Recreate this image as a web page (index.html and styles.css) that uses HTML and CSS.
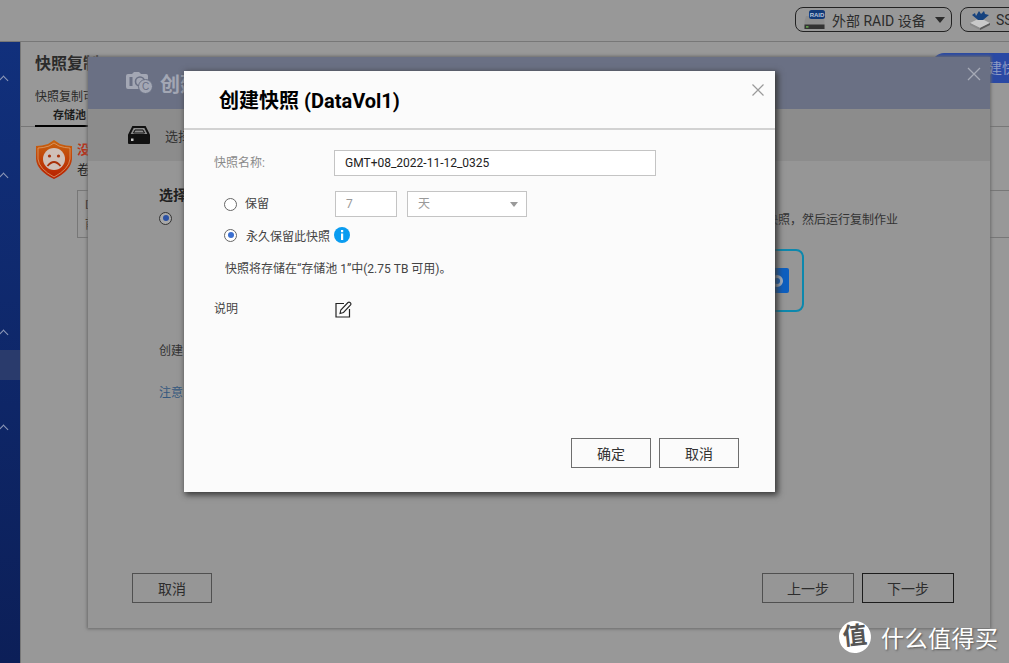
FILE: index.html
```html
<!DOCTYPE html>
<html lang="zh-CN">
<head>
    <meta charset="UTF-8">
    <meta name="viewport" content="width=device-width, initial-scale=1.0">
    <title>创建快照</title>
    <link rel="stylesheet" href="styles.css">
</head>
<body>
    <div class="desktop">
        <!-- 顶部工具栏 -->
        <div class="topbar">
            <div class="pill pill-raid">
                <svg class="pill-icon" width="21" height="20" viewBox="0 0 21 20">
                    <path d="M2 6 H19 L20.500 11 V19 H0.500 V11 Z" fill="#8e8e8e"/>
                    <rect x="0.500" y="14.500" width="20" height="4.500" fill="#333"/>
                    <rect x="2" y="16" width="2.500" height="1.800" fill="#5d9a4a"/>
                    <rect x="5" y="0" width="16" height="9" rx="2.500" fill="#123a78"/>
                    <text x="13" y="7" class="raid-tag">RAID</text>
                </svg>
                <span>外部 RAID 设备</span>
                <i class="caret"></i>
            </div>
            <div class="pill pill-ss">
                <svg class="pill-icon" width="22" height="22" viewBox="0 0 22 22">
                    <path d="M1 14 L11 9 L21 14 L11 19 Z" fill="#c9c9c9"/>
                    <path d="M1 14 L11 19 V21 L1 16 Z" fill="#8a8a8a"/>
                    <path d="M11 19 L21 14 V16 L11 21 Z" fill="#5a5a5a"/>
                    <path d="M3 6 L6 4 L7 7 L10 2 L12 5 L15 2 L16 5 L20 6 L14 11 L9 11 Z" fill="#16427e"/>
                </svg>
                <span>SSD</span>
            </div>
        </div>

        <div class="below">
            <!-- 左侧导航 -->
            <div class="sidebar">
                <div class="nav-row first"><i class="chev"></i></div>
                <div class="nav-row second"><i class="chev"></i></div>
                <div class="nav-row third"><i class="chev"></i></div>
                <div class="nav-row current"></div>
                <div class="nav-row fourth"><i class="chev"></i></div>
            </div>

            <!-- 后面的页面 -->
            <div class="main">
                <div class="main-head">
                    <h2 class="main-title">快照复制</h2>
                    <div class="create-btn">创建快照</div>
                </div>
                <p class="main-desc">快照复制可</p>
                <div class="tabs"><span class="tab on">存储池</span></div>
                <div class="alert">
                    <svg width="38" height="41" viewBox="0 0 38 41">
                        <defs>
                            <linearGradient id="shieldFill" x1="0" y1="0" x2="0" y2="1">
                                <stop offset="0" stop-color="#c8640f"/>
                                <stop offset="1" stop-color="#b81f00"/>
                            </linearGradient>
                        </defs>
                        <path d="M19 1 L25 5 Q31 7 37 7 L37 20 Q36 32 19 40 Q2 32 1 20 L1 7 Q7 7 13 5 Z" fill="url(#shieldFill)"/>
                        <path d="M19 4 L24 7 Q30 9 35 9 L35 20 Q34 30 19 38 Q4 30 3 20 L3 9 Q8 9 14 7 Z" fill="none" stroke="#d9a070" stroke-width="0.800"/>
                        <circle cx="19" cy="20" r="11" fill="#cfc0b8"/>
                        <circle cx="14.500" cy="17" r="1.600" fill="#a83008"/>
                        <circle cx="23.500" cy="17" r="1.600" fill="#a83008"/>
                        <path d="M12.500 27 Q19 19 25.500 27" fill="none" stroke="#a83008" stroke-width="1.800"/>
                    </svg>
                    <div class="alert-text">
                        <div class="alert-red">没有</div>
                        <div class="alert-line">卷</div>
                    </div>
                </div>
                <div class="infobox">
                    <div>D</div>
                    <div>前</div>
                </div>
            </div>
        </div>

        <!-- 向导窗口 -->
        <div class="wizard">
            <div class="wiz-head">
                <svg width="27" height="22" viewBox="0 0 27 22">
                    <path d="M0 4 Q0 2 2 2 H6 L8 0 H13 L15 2 H20 Q22 2 22 4 V17 H2 Q0 17 0 15 Z" fill="#a3a7b4"/>
                    <rect x="3.500" y="5" width="3" height="9" fill="#6a7084"/>
                    <circle cx="14" cy="9.500" r="4.500" fill="none" stroke="#6a7084" stroke-width="1.600"/>
                    <circle cx="19.500" cy="14.500" r="7" fill="#a3a7b4" stroke="#6a7084"/>
                    <text x="19.500" y="18.200" class="logo-c">C</text>
                </svg>
                <span class="wiz-title">创建快照</span>
                <svg class="wiz-close" width="14" height="14" viewBox="0 0 14 14">
                    <path d="M1 1 L13 13 M13 1 L1 13" stroke="#a6aab6" stroke-width="1.300"/>
                </svg>
            </div>
            <div class="wiz-step">
                <svg width="22" height="18" viewBox="0 0 22 18">
                    <path d="M5 1 H17 L21 9 H1 Z" fill="none" stroke="#111" stroke-width="2"/>
                    <path d="M7 4 H15 L16.500 7 H5.500 Z" fill="none" stroke="#111" stroke-width="1"/>
                    <rect x="0" y="9" width="22" height="9" rx="1" fill="#111"/>
                    <rect x="3" y="12.500" width="2.500" height="2.500" fill="#ccc"/>
                </svg>
                <span>选择快照</span>
            </div>
            <div class="wiz-body">
                <h3 class="wiz-sub">选择</h3>
                <div class="wiz-option">
                    <i class="radio on dim"></i>
                    <span>创建快照，然后运行复制作业</span>
                </div>
                <div class="wiz-cards">
                    <div class="wiz-card">
                        <div class="card-square"><i class="card-ring"></i></div>
                    </div>
                </div>
                <p class="wiz-line">创建</p>
                <p class="wiz-line note">注意</p>
            </div>
            <div class="wiz-foot">
                <button class="btn dim-btn">取消</button>
                <div class="foot-right">
                    <button class="btn dim-btn wide">上一步</button>
                    <button class="btn dim-btn wide strong">下一步</button>
                </div>
            </div>
        </div>

        <!-- 创建快照对话框 -->
        <div class="modal">
            <div class="modal-head">
                <h1 class="modal-title">创建快照 (DataVol1)</h1>
                <svg class="modal-close" width="12" height="12" viewBox="0 0 12 12">
                    <path d="M0.500 0.500 L11.500 11.500 M11.500 0.500 L0.500 11.500" stroke="#9a9a9a" stroke-width="1.200"/>
                </svg>
            </div>
            <div class="modal-body">
                <div class="field-row">
                    <label class="field-label gray">快照名称:</label>
                    <div class="input name-input">GMT+08_2022-11-12_0325</div>
                </div>
                <div class="keep-row">
                    <i class="radio"></i>
                    <span class="keep-label">保留</span>
                    <div class="input days">7</div>
                    <div class="input unit">天<i class="caret light"></i></div>
                </div>
                <div class="forever-row">
                    <i class="radio on"></i>
                    <span class="forever-label">永久保留此快照</span>
                    <svg width="16" height="16" viewBox="0 0 16 16">
                        <circle cx="8" cy="8" r="8" fill="#0a9cf0"/>
                        <rect x="7" y="3" width="2.200" height="2.200" fill="#fff"/>
                        <rect x="7" y="6.500" width="2.200" height="6.500" fill="#fff"/>
                    </svg>
                </div>
                <p class="store-note">快照将存储在“存储池 1”中(2.75 TB 可用)。</p>
                <div class="desc-row">
                    <label class="field-label">说明</label>
                    <svg width="17" height="17" viewBox="0 0 17 17">
                        <path d="M9 2.500 H1 V16 H14.500 V8" fill="none" stroke="#222" stroke-width="1.200"/>
                        <path d="M5 12.500 L5.800 9 L13 1.500 Q14 0.800 15 1.500 L15.800 2.300 Q16.300 3.200 15.600 4 L8.500 11.500 Z" fill="none" stroke="#222" stroke-width="1.100"/>
                    </svg>
                </div>
            </div>
            <div class="modal-foot">
                <button class="btn">确定</button>
                <button class="btn">取消</button>
            </div>
        </div>

        <!-- 水印 -->
        <div class="watermark">
            <span class="mark-circle">值</span>
            <span class="mark-text">什么值得买</span>
        </div>
    </div>
</body>
</html>
```

FILE: styles.css
```css
*{
    margin: 0;
    padding: 0;
    box-sizing: border-box;
}

body{
    background: #989898;
    font-family: Roboto, "Noto Sans CJK SC", sans-serif;
    font-size: 12px;
    color: #222;
    overflow: hidden;
}

.desktop{
    width: 1009px;
    height: 663px;
    position: relative;
    overflow: hidden;
}

/* 顶部工具栏 */
.topbar{
    height: 42px;
    border-bottom: 1px solid #777;
    display: flex;
    gap: 8px;
    padding: 7px 0 0 795px;
}

.pill{
    height: 25px;
    border: 1px solid #222;
    border-radius: 8px;
    display: flex;
    align-items: center;
    flex-shrink: 0;
    font-size: 14px;
    color: #2c2c2c;
}

.pill-raid{
    width: 157px;
    gap: 7px;
    padding-left: 8px;
}

.pill-ss{
    width: 90px;
    gap: 5px;
    padding-left: 8px;
}

.raid-tag{
    font-family: "Liberation Sans", sans-serif;
    font-size: 6px;
    font-weight: 700;
    fill: #b8c4d8;
    text-anchor: middle;
}

.caret{
    width: 0;
    height: 0;
    border-left: 5px solid transparent;
    border-right: 5px solid transparent;
    border-top: 6px solid #2c2c2c;
    margin-left: 2px;
}

.caret.light{
    border-left-width: 4.500px;
    border-right-width: 4.500px;
    border-top: 5px solid #9a9a9a;
    margin-left: auto;
}

.below{
    display: flex;
    height: 621px;
}

/* 左侧导航 */
.sidebar{
    width: 21px;
    background: linear-gradient(#11307c, #0c1f58);
    border-right: 1px solid #777;
    padding-top: 21px;
    flex-shrink: 0;
}

.nav-row{
    height: 30px;
    display: flex;
    align-items: center;
}

.nav-row.second{
    margin-top: 67px;
}

.nav-row.third{
    margin-top: 127px;
}

.nav-row.current{
    margin-top: 3px;
    background: #2a3b6c;
}

.nav-row.fourth{
    margin-top: 32px;
}

.chev{
    width: 7px;
    height: 7px;
    border-top: 1px solid #8f9ab8;
    border-left: 1px solid #8f9ab8;
    transform: rotate(45deg);
    margin: 4px 0 0 0;
}

/* 后面的页面 */
.main{
    flex: 1;
    min-width: 0;
}

.main-head{
    display: flex;
    justify-content: space-between;
    height: 40px;
    padding: 11px 0 0 14px;
}

.main-title{
    font-size: 16px;
    line-height: 22px;
    font-weight: 700;
    color: #2b2b2b;
}

.create-btn{
    width: 77px;
    height: 30px;
    background: #2a49a4;
    border-radius: 12px 0 0 0;
    color: #8f9cc4;
    font-size: 14px;
    line-height: 30px;
    padding-left: 42px;
    white-space: nowrap;
    overflow: hidden;
}

.main-desc{
    font-size: 12px;
    line-height: 18px;
    padding-left: 14px;
    margin-top: 6px;
    color: #2b2b2b;
}

.tabs{
    border-bottom: 1px solid #777;
    padding-left: 14px;
    height: 21px;
}

.tab{
    display: block;
    width: 69px;
    height: 21px;
    border-bottom: 2px solid #000;
    text-align: center;
    font-size: 11px;
    font-weight: 700;
    line-height: 20px;
    color: #1c1c1c;
}

.alert{
    display: flex;
    gap: 4px;
    padding: 12px 0 0 14px;
}

.alert-text{
    font-size: 13px;
    line-height: 20px;
    padding-top: 1px;
}

.alert-red{
    color: #b8321a;
    font-weight: 700;
}

.alert-line{
    color: #222;
}

.infobox{
    margin: 10px 0 0 56px;
    height: 48px;
    border: 1px solid #777;
    border-right: 0;
    padding: 4px 0 0 7px;
    font-size: 13px;
    line-height: 19px;
    color: #222;
}

/* 向导窗口 */
.wizard{
    position: absolute;
    left: 88px;
    top: 57px;
    width: 902px;
    height: 571px;
    background: #969696;
    box-shadow: 0 0 3px 1px #6a6a6a;
    display: flex;
    flex-direction: column;
}

.wiz-head{
    height: 52px;
    background: #6a7084;
    display: flex;
    align-items: center;
    padding: 0 9px 0 38px;
    gap: 7px;
}

.logo-c{
    font-family: "Liberation Sans", sans-serif;
    font-size: 10px;
    text-anchor: middle;
    fill: #6a7084;
}

.wiz-title{
    font-size: 20px;
    font-weight: 700;
    color: #a3a7b4;
}

.wiz-close{
    margin: -19px 0 0 auto;
}

.wiz-step{
    height: 52px;
    background: #8c8c8c;
    display: flex;
    align-items: center;
    gap: 15px;
    padding-left: 40px;
    font-size: 13px;
    color: #333;
}

.wiz-body{
    flex: 1;
    padding: 24px 92px 0 71px;
}

.wiz-sub{
    font-size: 14px;
    line-height: 20px;
    font-weight: 700;
    color: #1f1f1f;
}

.wiz-option{
    display: flex;
    justify-content: space-between;
    align-items: center;
    height: 18px;
    margin-top: 4px;
    color: #333;
}

.wiz-cards{
    display: flex;
    justify-content: flex-end;
    margin: 22px 94px 0 0;
    height: 63px;
}

.wiz-card{
    width: 70px;
    border: 2px solid #0d88ad;
    border-radius: 8px;
    display: flex;
    justify-content: flex-end;
    align-items: center;
    padding-right: 13px;
}

.card-square{
    width: 30px;
    height: 25px;
    background: #0d5fc0;
    border-radius: 2px;
    display: flex;
    justify-content: flex-end;
    align-items: center;
    padding-right: 6px;
}

.card-ring{
    width: 12px;
    height: 12px;
    border: 3px solid #a8b4c4;
    border-radius: 50%;
}

.wiz-line{
    font-size: 12px;
    line-height: 18px;
    margin-top: 30px;
    color: #333;
}

.wiz-line.note{
    margin-top: 24px;
    color: #35587e;
}

.wiz-foot{
    height: 55px;
    padding: 0 36px 0 44px;
    display: flex;
    justify-content: space-between;
    align-items: flex-start;
}

.foot-right{
    display: flex;
    gap: 8px;
}

/* 按钮 */
.btn{
    width: 80px;
    height: 30px;
    background: #fbfbfb;
    border: 1px solid #6e6e6e;
    font-family: Roboto, "Noto Sans CJK SC", sans-serif;
    font-size: 14px;
    color: #333;
}

.dim-btn{
    background: transparent;
    border-color: #505050;
    color: #2c2c2c;
}

.btn.wide{
    width: 92px;
}

.btn.strong{
    border-color: #1c1c1c;
}

/* 对话框 */
.modal{
    position: absolute;
    left: 184px;
    top: 71px;
    width: 591px;
    height: 421px;
    background: #fbfbfb;
    box-shadow: 2px 2px 6px 1px #3a3a3a;
    display: flex;
    flex-direction: column;
}

.modal-head{
    height: 59px;
    border-bottom: 2px solid #d2d2d2;
    display: flex;
    justify-content: space-between;
    padding: 15px 11px 0 35px;
}

.modal-title{
    font-size: 20px;
    line-height: 30px;
    font-weight: 700;
    color: #000;
}

.modal-close{
    flex-shrink: 0;
    margin-top: -2px;
}

.modal-body{
    flex: 1;
    padding: 20px 0 0 30px;
}

.field-row{
    display: flex;
    align-items: center;
    height: 26px;
}

.field-label{
    width: 120px;
    flex-shrink: 0;
    color: #444;
    padding-bottom: 4px;
}

.field-label.gray{
    color: #8a8a8a;
}

.input{
    height: 26px;
    border: 1px solid #c4c4c4;
    background: #fff;
    line-height: 24px;
    padding-left: 10px;
}

.name-input{
    width: 322px;
    color: #222;
}

.keep-row{
    display: flex;
    align-items: center;
    height: 26px;
    margin-top: 15px;
    padding-left: 10px;
}

.keep-label{
    width: 90px;
    margin-left: 8px;
    color: #444;
    padding-bottom: 4px;
}

.days{
    width: 62px;
    color: #999;
}

.unit{
    width: 120px;
    margin-left: 10px;
    color: #999;
    display: flex;
    align-items: center;
    padding-right: 8px;
}

.forever-row{
    display: flex;
    align-items: center;
    height: 18px;
    margin-top: 9px;
    padding-left: 10px;
}

.forever-label{
    width: 88px;
    margin-left: 9px;
    color: #444;
}

.radio{
    display: block;
    width: 13px;
    height: 13px;
    border: 1px solid #666;
    border-radius: 50%;
    background: #fff;
    flex-shrink: 0;
    position: relative;
}

.radio.on::after{
    content: "";
    position: absolute;
    left: 2.500px;
    top: 2.500px;
    width: 6px;
    height: 6px;
    border-radius: 50%;
    background: #3b6fd0;
}

.radio.dim{
    background: #a8a8a8;
    border-color: #333;
}

.radio.dim::after{
    background: #2c52a4;
}

.store-note{
    margin: 16px 0 0 11px;
    line-height: 18px;
    color: #444;
}

.desc-row{
    display: flex;
    align-items: center;
    height: 18px;
    margin-top: 22px;
}

.desc-row svg{
    margin-left: 1px;
}

.modal-foot{
    display: flex;
    justify-content: flex-end;
    gap: 8px;
    padding: 0 36px 24px 0;
}

/* 水印 */
.watermark{
    position: absolute;
    left: 839px;
    top: 620px;
    display: flex;
    align-items: center;
    gap: 10px;
}

.mark-circle{
    width: 32px;
    height: 32px;
    border-radius: 50%;
    background: #fff;
    color: #555;
    font-size: 24px;
    font-weight: 700;
    line-height: 31px;
    text-align: center;
    transform: rotate(-6deg);
}

.mark-text{
    font-size: 23px;
    letter-spacing: 0.500px;
    color: #fff;
    text-shadow: 1px 1px 2px #555;
    white-space: nowrap;
}
```
